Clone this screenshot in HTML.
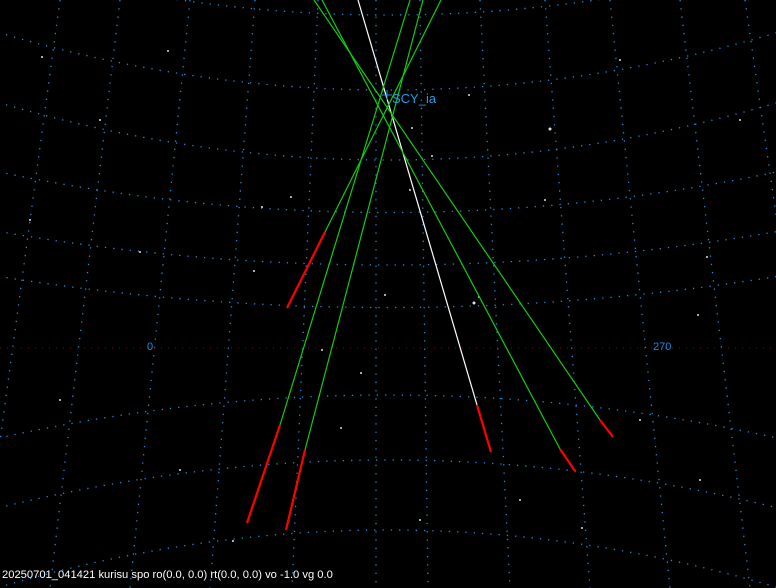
<!DOCTYPE html>
<html><head><meta charset="utf-8"><style>
html,body{margin:0;padding:0;background:#000;}
body{width:776px;height:588px;overflow:hidden;position:relative;font-family:"Liberation Sans",sans-serif;}
svg{position:absolute;left:0;top:0;}
.t{position:absolute;font-size:12px;}
</style></head><body>
<svg width="776" height="588" viewBox="0 0 776 588">
<g fill="none" stroke="#1a8fd8" stroke-width="1.3" stroke-dasharray="1.3 7">
<path d="M-10 -40 Q388 70 786 -40"/>
<path d="M-10 30 Q388 150 786 30"/>
<path d="M-10 100 Q388 220 786 100"/>
<path d="M-10 170 Q388 255 786 170"/>
<path d="M-10 230 Q388 300 786 230"/>
<path d="M-10 275 Q388 340 786 275"/>
<path d="M-10 440 Q388 350 786 440"/>
<path d="M-10 510 Q388 410 786 510"/>
<path d="M-10 590 Q388 470 786 590"/>
<path d="M60 0 L-20 588"/>
<path d="M120 0 L50 588"/>
<path d="M190 0 L130 588"/>
<path d="M255 0 L210 588"/>
<path d="M318 0 L292 588"/>
<path d="M376 0 L376 588"/>
<path d="M420 0 L428 588"/>
<path d="M480 0 L510 588"/>
<path d="M545 0 L590 588"/>
<path d="M610 0 L670 588"/>
<path d="M680 0 L750 588"/>
<path d="M745 0 L830 588"/>
</g>
<line x1="0" y1="348" x2="776" y2="348" stroke="#7a1010" stroke-width="1" stroke-dasharray="1 6"/>
<g fill="#ddd">
<circle cx="42" cy="57" r="1"/><circle cx="140" cy="252" r="1"/><circle cx="168" cy="51" r="1"/><circle cx="262" cy="207" r="1"/><circle cx="291" cy="197" r="1"/><circle cx="254" cy="271" r="1"/><circle cx="550" cy="129" r="1.5"/><circle cx="474" cy="303" r="1.5"/><circle cx="479" cy="297" r="1"/><circle cx="410" cy="190" r="1"/><circle cx="707" cy="257" r="1"/><circle cx="698" cy="315" r="1"/><circle cx="322" cy="350" r="1"/><circle cx="361" cy="373" r="1"/><circle cx="341" cy="428" r="1"/><circle cx="233" cy="541" r="1"/><circle cx="432" cy="156" r="1"/><circle cx="469" cy="95" r="1"/><circle cx="412" cy="128" r="1"/><circle cx="545" cy="200" r="1"/><circle cx="620" cy="60" r="1"/><circle cx="100" cy="120" r="1"/><circle cx="60" cy="400" r="1"/><circle cx="180" cy="470" r="1"/><circle cx="520" cy="500" r="1"/><circle cx="700" cy="480" r="1"/><circle cx="640" cy="420" r="1"/><circle cx="420" cy="520" r="1"/><circle cx="385" cy="295" r="1"/><circle cx="582" cy="528" r="1"/><circle cx="740" cy="120" r="1"/><circle cx="30" cy="220" r="1"/>
</g>
<g stroke-width="1.2">
<line x1="358" y1="0" x2="477" y2="405" stroke="#fff"/>
<line x1="477" y1="405" x2="491" y2="452" stroke="#f00" stroke-width="2.2"/>
<line x1="314" y1="0" x2="600" y2="420" stroke="#1c1"/>
<line x1="600" y1="420" x2="613" y2="437" stroke="#f00" stroke-width="2.2"/>
<line x1="322" y1="0" x2="560" y2="449" stroke="#1c1"/>
<line x1="560" y1="449" x2="575" y2="471" stroke="#f00" stroke-width="2.2"/>
<line x1="441" y1="0" x2="325" y2="232" stroke="#1c1"/>
<line x1="325" y1="232" x2="287" y2="308" stroke="#f00" stroke-width="2.2"/>
<line x1="410" y1="0" x2="280" y2="425" stroke="#1c1"/>
<line x1="280" y1="425" x2="247" y2="523" stroke="#f00" stroke-width="2.2"/>
<line x1="423" y1="0" x2="305" y2="450" stroke="#1c1"/>
<line x1="305" y1="450" x2="286" y2="530" stroke="#f00" stroke-width="2.2"/>
</g>
<path d="M387 90 v10 M382 95 h10" stroke="#1a8fd8" stroke-width="1"/>
</svg>
<div class="t" style="left:392px;top:91px;color:#1aa0e8;font-size:13px;">SCY_ia</div>
<div class="t" style="left:147px;top:341px;color:#1a8fe0;font-size:11px;">0</div>
<div class="t" style="left:653px;top:341px;color:#1a8fe0;font-size:11px;">270</div>
<div class="t" style="left:2px;top:569px;color:#fff;font-size:11.2px;">20250701_041421 kurisu spo ro(0.0, 0.0) rt(0.0, 0.0) vo -1.0 vg 0.0</div>
</body></html>
